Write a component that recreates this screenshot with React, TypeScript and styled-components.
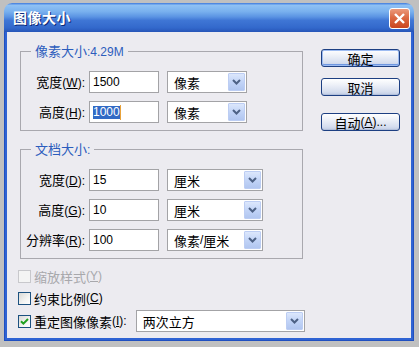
import React from 'react';
import styled, { createGlobalStyle } from 'styled-components';

const GlobalStyle = createGlobalStyle`
  html, body {
    margin: 0;
    background: #c0c0c0;
  }
  body {
    font-family: "Liberation Sans", "Noto Sans CJK SC", sans-serif;
    font-size: 12px;
    line-height: 15px;
    color: #000;
  }
`;

const Page = styled.div`
  padding: 3px 0 0 4px;
  height: 347px;
  box-sizing: border-box;
`;

const Window = styled.div`
  width: 410px;
  height: 338px;
  display: flex;
  flex-direction: column;
  border-radius: 8px 8px 0 0;
  overflow: hidden;
`;

const TitleBar = styled.div`
  height: 29px;
  flex: none;
  display: flex;
  align-items: center;
  padding: 0 4px 0 9px;
  border-radius: 8px 8px 0 0;
  background: linear-gradient(
    to bottom,
    #3d78dc 0%,
    #8fc1f4 8%,
    #78b0ee 30%,
    #5a93e3 48%,
    #3f76d5 60%,
    #3369cc 85%,
    #2755b8 100%
  );
`;

const Title = styled.div`
  color: #fff;
  font-weight: bold;
  font-size: 14px;
  font-family: "Noto Sans CJK SC", sans-serif;
  text-shadow: 1px 1px #0c2a78;
  letter-spacing: 0.5px;
`;

const CloseButton = styled.div`
  margin-left: auto;
  margin-top: 2px;
  width: 21px;
  height: 21px;
  box-sizing: border-box;
  border: 1px solid #fff;
  border-radius: 3px;
  background: linear-gradient(to bottom, #eb9a7c, #dc6a44 45%, #c9451f);
  display: flex;
  align-items: center;
  justify-content: center;
`;

const Frame = styled.div`
  flex: 1;
  display: flex;
  padding: 0 3px 3px;
  background: #2f63d3;
  box-shadow: inset 1px 0 #1f4fc0, inset -1px 0 #1f4fc0, inset 0 -1px #1f4fc0;
`;

const Content = styled.div`
  flex: 1;
  display: flex;
  flex-direction: column;
  background: #ecebf0;
`;

const Top = styled.div`
  display: flex;
  padding: 12px 0 0 13px;
`;

const Groups = styled.div`
  width: 283px;
  display: flex;
  flex-direction: column;
`;

const Group = styled.fieldset<{ $mt?: number }>`
  margin: ${p => p.$mt ?? 0}px 0 0;
  padding: 12px 0 7px 0;
  border: 1px solid #a9a8ae;
  min-width: 0;
`;

const Legend = styled.legend`
  margin-left: 10px;
  padding: 0 4px;
  line-height: 14px;
  color: #2c5dbd;
`;

const Row = styled.div`
  display: flex;
  align-items: center;
  height: 22px;
  & + & {
    margin-top: 8px;
  }
`;

const Label = styled.div`
  width: 64px;
  margin-right: 4px;
  text-align: right;
  white-space: nowrap;
`;

const Field = styled.div`
  width: 70px;
  height: 22px;
  box-sizing: border-box;
  border: 1px solid #a3a3a6;
  background: #fff;
  padding-left: 3px;
  display: flex;
  align-items: center;
`;

const Selection = styled.span`
  background: #316ac5;
  color: #fff;
  line-height: 13px;
`;

const Caret = styled.span`
  width: 1px;
  height: 15px;
  background: #e8a23a;
`;

const ComboBox = styled.div<{ $w: number; $ml?: number }>`
  width: ${p => p.$w}px;
  height: 22px;
  margin-left: ${p => p.$ml ?? 8}px;
  box-sizing: border-box;
  border: 1px solid #a3a3a6;
  background: #fff;
  display: flex;
  align-items: stretch;
`;

const ComboText = styled.div`
  flex: 1;
  padding-left: 6px;
  display: flex;
  align-items: center;
  white-space: nowrap;
`;

const DropButton = styled.div`
  width: 17px;
  margin: 1px;
  box-sizing: border-box;
  border: 1px solid #bccdf3;
  border-radius: 1px;
  background: linear-gradient(to bottom, #dce7fc, #c2d4f7 50%, #b1c6f0);
  display: flex;
  align-items: center;
  justify-content: center;
`;

const Buttons = styled.div`
  margin: 5px 0 0 18px;
  display: flex;
  flex-direction: column;
`;

const PushButton = styled.div<{ $default?: boolean; $mt?: number }>`
  width: 79px;
  height: 18px;
  margin-top: ${p => p.$mt ?? 0}px;
  box-sizing: border-box;
  border: 1px solid #1d3f82;
  border-radius: 3px;
  background: linear-gradient(to bottom, #ffffff, #eef1f8 35%, #d5ddee 80%, #bfcbe4);
  box-shadow: ${p =>
    p.$default ? 'inset 0 0 0 1px #9ebcf2, inset 0 -2px #6f97e0' : 'inset 0 -1px #b3c0db'};
  display: flex;
  align-items: center;
  justify-content: center;
  white-space: nowrap;
`;

const Options = styled.div`
  margin-top: 6px;
  padding-left: 11px;
  display: flex;
  flex-direction: column;
`;

const CheckRow = styled.div<{ $disabled?: boolean; $mt?: number }>`
  display: flex;
  align-items: center;
  height: 22px;
  margin-top: ${p => p.$mt ?? 0}px;
  color: ${p => (p.$disabled ? '#a8a8ac' : '#000')};
  white-space: nowrap;
`;

const CheckBox = styled.div<{ $disabled?: boolean }>`
  width: 13px;
  height: 13px;
  margin-right: 3px;
  box-sizing: border-box;
  border: 1px solid ${p => (p.$disabled ? '#c8c8cc' : '#1c5180')};
  background: ${p =>
    p.$disabled ? '#f4f4f4' : 'linear-gradient(135deg, #d9d9d6, #f4f4f2 60%, #ffffff)'};
  display: flex;
  align-items: center;
  justify-content: center;
`;

const Han = styled.span`
  font-family: "Noto Sans CJK SC", sans-serif;
  font-size: 13px;
`;

const CJK = /([\u2e80-\u9fff\uff00-\uffef]+)/;

// "宽度(&W):" -> CJK runs in Han, the letter after & underlined
const Txt = ({ children }: { children: string }) => (
  <>
    {children.split(CJK).map((part, i) => {
      if (!part) return null;
      if (CJK.test(part)) return <Han key={i}>{part}</Han>;
      const at = part.indexOf('&');
      if (at < 0) return <React.Fragment key={i}>{part}</React.Fragment>;
      return (
        <React.Fragment key={i}>
          {part.slice(0, at)}
          <u>{part[at + 1]}</u>
          {part.slice(at + 2)}
        </React.Fragment>
      );
    })}
  </>
);

const Chevron = () => (
  <svg width="9" height="6" viewBox="0 0 9 6">
    <path d="M1 1 L4.5 4.5 L8 1" fill="none" stroke="#4d6185" strokeWidth="2" />
  </svg>
);

const Combo = ({ w, ml, children }: { w: number; ml?: number; children: string }) => (
  <ComboBox $w={w} $ml={ml}>
    <ComboText>
      <Txt>{children}</Txt>
    </ComboText>
    <DropButton>
      <Chevron />
    </DropButton>
  </ComboBox>
);

type FieldDef = { label: string; value: string; unit: string; selected?: boolean };

const pixelRows: FieldDef[] = [
  { label: '宽度(&W):', value: '1500', unit: '像素' },
  { label: '高度(&H):', value: '1000', unit: '像素', selected: true },
];

const docRows: FieldDef[] = [
  { label: '宽度(&D):', value: '15', unit: '厘米' },
  { label: '高度(&G):', value: '10', unit: '厘米' },
  { label: '分辨率(&R):', value: '100', unit: '像素/厘米' },
];

const FieldRow = ({ def, unitWidth }: { def: FieldDef; unitWidth: number }) => (
  <Row>
    <Label>
      <Txt>{def.label}</Txt>
    </Label>
    <Field>
      {def.selected ? (
        <>
          <Selection>{def.value}</Selection>
          <Caret />
        </>
      ) : (
        def.value
      )}
    </Field>
    <Combo w={unitWidth}>{def.unit}</Combo>
  </Row>
);

export default function App() {
  return (
    <>
      <GlobalStyle />
      <Page>
        <Window>
          <TitleBar>
            <Title>图像大小</Title>
            <CloseButton>
              <svg width="13" height="13" viewBox="0 0 13 13">
                <path d="M2 2 L11 11 M11 2 L2 11" stroke="#fff" strokeWidth="2.4" />
              </svg>
            </CloseButton>
          </TitleBar>
          <Frame>
            <Content>
              <Top>
                <Groups>
                  <Group>
                    <Legend>
                      <Txt>像素大小:4.29M</Txt>
                    </Legend>
                    {pixelRows.map(r => (
                      <FieldRow key={r.label} def={r} unitWidth={80} />
                    ))}
                  </Group>
                  <Group $mt={11}>
                    <Legend>
                      <Txt>文档大小:</Txt>
                    </Legend>
                    {docRows.map(r => (
                      <FieldRow key={r.label} def={r} unitWidth={96} />
                    ))}
                  </Group>
                </Groups>
                <Buttons>
                  <PushButton $default>
                    <Txt>确定</Txt>
                  </PushButton>
                  <PushButton $mt={11}>
                    <Txt>取消</Txt>
                  </PushButton>
                  <PushButton $mt={17}>
                    <Txt>自动(&A)...</Txt>
                  </PushButton>
                </Buttons>
              </Top>
              <Options>
                <CheckRow $disabled>
                  <CheckBox $disabled />
                  <Txt>缩放样式(&Y)</Txt>
                </CheckRow>
                <CheckRow>
                  <CheckBox />
                  <Txt>约束比例(&C)</Txt>
                </CheckRow>
                <CheckRow $mt={1}>
                  <CheckBox>
                    <svg width="9" height="9" viewBox="0 0 9 9">
                      <path d="M1 4.2 L3.4 6.6 L8 2" fill="none" stroke="#21a121" strokeWidth="2" />
                    </svg>
                  </CheckBox>
                  <Txt>重定图像像素(&I):</Txt>
                  <Combo w={169} ml={9}>
                    两次立方
                  </Combo>
                </CheckRow>
              </Options>
            </Content>
          </Frame>
        </Window>
      </Page>
    </>
  );
}
